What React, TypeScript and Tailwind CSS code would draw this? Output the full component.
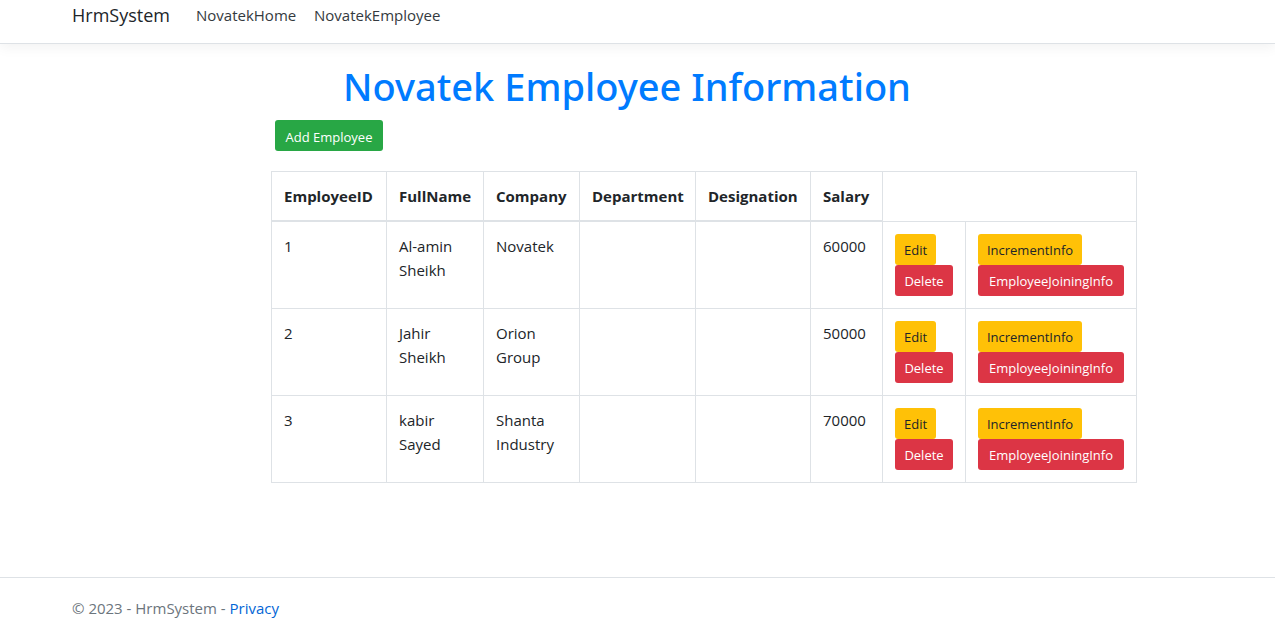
import type { ReactNode } from "react";

type Employee = {
  id: number;
  name: string;
  company: string;
  department: string;
  designation: string;
  salary: number;
};

const employees: Employee[] = [
  { id: 1, name: "Al-amin Sheikh", company: "Novatek", department: "", designation: "", salary: 60000 },
  { id: 2, name: "Jahir Sheikh", company: "Orion Group", department: "", designation: "", salary: 50000 },
  { id: 3, name: "kabir Sayed", company: "Shanta Industry", department: "", designation: "", salary: 70000 },
];

const headings = ["EmployeeID", "FullName", "Company", "Department", "Designation", "Salary"];

const tones = {
  success: "bg-[#28a745] text-white",
  warning: "bg-[#ffc107] text-[#212529]",
  danger: "bg-[#dc3545] text-white",
};

function ActionLink({ tone, width, children }: { tone: keyof typeof tones; width: string; children: ReactNode }) {
  return (
    <a
      href="#"
      className={`flex h-[31px] items-center justify-center rounded-[3px] pt-0.5 text-[13px] leading-5 whitespace-nowrap ${width} ${tones[tone]}`}
    >
      {children}
    </a>
  );
}

function Container({ children, className = "" }: { children: ReactNode; className?: string }) {
  return (
    <div className="pr-[21px]">
      <div className={`mx-auto max-w-[1140px] px-[15px] ${className}`}>{children}</div>
    </div>
  );
}

export default function App() {
  return (
    <div className="flex min-h-screen flex-col bg-white font-['Open_Sans','Noto_Sans',sans-serif] text-[15px] leading-6 text-[#212529]">
      <header className="border-b border-[#dee2e6] pb-3.5 shadow-[0_4px_12px_rgba(0,0,0,0.05)]">
        <Container>
          <nav className="flex h-[29px] items-center">
            <a href="#" className="w-[124px] text-lg text-[#212529]">
              HrmSystem
            </a>
            <a href="#" className="w-[118px] text-[#343a40]">
              NovatekHome
            </a>
            <a href="#" className="text-[#343a40]">
              NovatekEmployee
            </a>
          </nav>
        </Container>
      </header>

      <main className="grow pb-10">
        <Container className="pt-[18px]">
          <h1 className="text-center font-['Noto_Sans','Open_Sans',sans-serif] text-[38px] leading-12 font-medium text-[#007bff]">
            Novatek Employee Information
          </h1>
          <div className="mt-[10px] ml-[203px] flex">
            <ActionLink tone="success" width="w-[108px]">
              Add Employee
            </ActionLink>
          </div>
          <table className="mt-5 ml-[199px] w-[866px] table-fixed border-collapse border border-[#dee2e6]">
            <colgroup>
              <col className="w-[115px]" />
              <col className="w-[97px]" />
              <col className="w-[96px]" />
              <col className="w-[116px]" />
              <col className="w-[115px]" />
              <col className="w-[72px]" />
              <col className="w-[83px]" />
              <col className="w-[171px]" />
            </colgroup>
            <thead>
              <tr>
                {headings.map((heading) => (
                  <th
                    key={heading}
                    scope="col"
                    className="border border-b-2 border-[#dee2e6] px-3 py-3 text-left font-bold"
                  >
                    {heading}
                  </th>
                ))}
                <td colSpan={2} className="border border-[#dee2e6]" />
              </tr>
            </thead>
            <tbody>
              {employees.map((employee) => (
                <tr key={employee.id} className="align-top [&>td]:border [&>td]:border-[#dee2e6] [&>td]:p-3">
                  <td>{employee.id}</td>
                  <td>{employee.name}</td>
                  <td>{employee.company}</td>
                  <td>{employee.department}</td>
                  <td>{employee.designation}</td>
                  <td>{employee.salary}</td>
                  <td>
                    <ActionLink tone="warning" width="w-[41px]">
                      Edit
                    </ActionLink>
                    <ActionLink tone="danger" width="w-[58px]">
                      Delete
                    </ActionLink>
                  </td>
                  <td>
                    <ActionLink tone="warning" width="w-[104px]">
                      IncrementInfo
                    </ActionLink>
                    <ActionLink tone="danger" width="w-[146px]">
                      EmployeeJoiningInfo
                    </ActionLink>
                  </td>
                </tr>
              ))}
            </tbody>
          </table>
        </Container>
      </main>

      <footer className="border-t border-[#dee2e6] pt-[18px] pb-[9px] text-[#6c757d]">
        <Container>
          © 2023 - HrmSystem -{" "}
          <a href="#" className="text-[#0366d6]">
            Privacy
          </a>
        </Container>
      </footer>
    </div>
  );
}
